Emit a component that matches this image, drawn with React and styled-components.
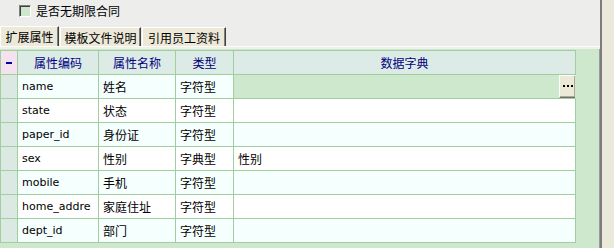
import React from "react";
import styled, { createGlobalStyle } from "styled-components";

const GlobalStyle = createGlobalStyle`
  html, body { margin: 0; padding: 0; }
  body {
    background: #edeeec;
    font-family: "Noto Sans CJK SC", "DejaVu Sans", sans-serif;
  }
`;

const LINE = "#9fcf9f";

const Frame = styled.div`
  display: flex;
  width: 614px;
  height: 248px;
  overflow: hidden;
  background: #edeeec;
`;

const Main = styled.div`
  width: 600px;
  display: flex;
  flex-direction: column;
`;

const Side = styled.div`
  flex: 1;
  border-left: 2px solid #7c7c7c;
  background: #ebe9da;
`;

const TopBar = styled.div`
  height: 22px;
  display: flex;
  align-items: center;
  gap: 5px;
  padding-left: 19px;
  box-sizing: border-box;
`;

const CheckBox = styled.span`
  width: 12px;
  height: 12px;
  box-sizing: border-box;
  border-style: solid;
  border-width: 1px;
  border-color: #808080 #ffffff #ffffff #808080;
  box-shadow: inset 1px 1px #404040;
  background: #cde8cd;
`;

const Label = styled.span`
  font-family: "Noto Sans CJK SC", sans-serif;
  font-size: 12px;
  line-height: 12px;
  color: #000;
`;

const TabStrip = styled.div`
  height: 24px;
  display: flex;
  align-items: flex-end;
  gap: 1px;
`;

const Tab = styled.div`
  width: ${(p) => p.$w}px;
  height: ${(p) => (p.$active ? 20 : 19)}px;
  box-sizing: border-box;
  display: flex;
  align-items: center;
  justify-content: center;
  padding-bottom: ${(p) => (p.$active ? 1 : 0)}px;
  background: #ece9d8;
  border-top: 1px solid #ffffff;
  border-left: 1px solid #ffffff;
  border-right: 1px solid #404040;
  box-shadow: inset -1px 0 #808080;
  font-family: "Noto Sans CJK SC", sans-serif;
  font-size: 12px;
  color: #000;
`;

const Separator = styled.div`
  height: 3px;
  box-sizing: border-box;
  border-top: 1px solid #fcfcf8;
  background: #f1f0e8;
`;

const GridArea = styled.div`
  flex: 1;
  background: #cde8cd;
  padding-top: 1px;
  border-right: 1px solid #9a9a9a;
`;

const Table = styled.div`
  display: grid;
  grid-template-columns: 17px 81px 77px 58px 342px;
  grid-auto-rows: 24px;
  width: max-content;
  border-left: 1px solid ${LINE};
  border-top: 1px solid ${LINE};
`;

const Cell = styled.div`
  box-sizing: border-box;
  border-right: 1px solid ${LINE};
  border-bottom: 1px solid ${LINE};
  display: flex;
  align-items: center;
  overflow: hidden;
  white-space: nowrap;
  padding-left: 4px;
  color: #000;
  font-family: ${(p) =>
    p.$latin ? '"DejaVu Sans", sans-serif' : '"Noto Sans CJK SC", sans-serif'};
  font-size: ${(p) => (p.$latin ? 11 : 12)}px;
  background: ${(p) =>
    p.$selected ? "#cde8cd" : p.$alt ? "#f4fffe" : "#ffffff"};
`;

const HeadCell = styled.div`
  box-sizing: border-box;
  border-right: 1px solid ${LINE};
  border-bottom: 1px solid ${LINE};
  display: flex;
  align-items: center;
  justify-content: center;
  background: #dcebe6;
  color: #000080;
  font-family: "Noto Sans CJK SC", sans-serif;
  font-size: 12px;
`;

const CornerCell = styled(HeadCell)`
  background: #f4e3ee;
`;

const Dash = styled.span`
  width: 6px;
  height: 2px;
  background: #0000a0;
`;

const Indicator = styled.div`
  box-sizing: border-box;
  border-right: 1px solid ${LINE};
  border-bottom: 1px solid ${LINE};
  background: #dce9e3;
`;

const EditCell = styled(Cell)`
  padding-left: 0;
  justify-content: flex-end;
  align-items: stretch;
  border-right-color: transparent;
`;

const EllipsisButton = styled.div`
  width: 17px;
  margin-right: -1px;
  box-sizing: border-box;
  display: flex;
  align-items: center;
  justify-content: center;
  gap: 2px;
  padding-bottom: 1px;
  background: #ece9d8;
  border-style: solid;
  border-width: 1px;
  border-color: #ffffff #716f64 #716f64 #ffffff;
  box-shadow: inset -1px -1px #aca899;
`;

const Dot = styled.span`
  width: 2px;
  height: 2px;
  background: #000;
`;

const rows = [
  { code: "name", name: "姓名", type: "字符型", dict: "" },
  { code: "state", name: "状态", type: "字符型", dict: "" },
  { code: "paper_id", name: "身份证", type: "字符型", dict: "" },
  { code: "sex", name: "性别", type: "字典型", dict: "性别" },
  { code: "mobile", name: "手机", type: "字符型", dict: "" },
  { code: "home_addre", name: "家庭住址", type: "字符型", dict: "" },
  { code: "dept_id", name: "部门", type: "字符型", dict: "" },
];

const tabs = [
  { label: "扩展属性", w: 59, active: true },
  { label: "模板文件说明", w: 81 },
  { label: "引用员工资料", w: 84 },
];

export default function App() {
  return (
    <>
      <GlobalStyle />
      <Frame>
        <Main>
          <TopBar>
            <CheckBox />
            <Label>是否无期限合同</Label>
          </TopBar>
          <TabStrip>
            {tabs.map((t) => (
              <Tab key={t.label} $w={t.w} $active={t.active}>
                {t.label}
              </Tab>
            ))}
          </TabStrip>
          <Separator />
          <GridArea>
            <Table>
              <CornerCell>
                <Dash />
              </CornerCell>
              <HeadCell>属性编码</HeadCell>
              <HeadCell>属性名称</HeadCell>
              <HeadCell>类型</HeadCell>
              <HeadCell>数据字典</HeadCell>
              {rows.map((r, i) => {
                const alt = i % 2 === 0;
                return (
                  <React.Fragment key={r.code}>
                    <Indicator />
                    <Cell $latin $alt={alt}>{r.code}</Cell>
                    <Cell $alt={alt}>{r.name}</Cell>
                    <Cell $alt={alt}>{r.type}</Cell>
                    {i === 0 ? (
                      <EditCell $selected>
                        <EllipsisButton>
                          <Dot />
                          <Dot />
                          <Dot />
                        </EllipsisButton>
                      </EditCell>
                    ) : (
                      <Cell $alt={alt}>{r.dict}</Cell>
                    )}
                  </React.Fragment>
                );
              })}
            </Table>
          </GridArea>
        </Main>
        <Side />
      </Frame>
    </>
  );
}
